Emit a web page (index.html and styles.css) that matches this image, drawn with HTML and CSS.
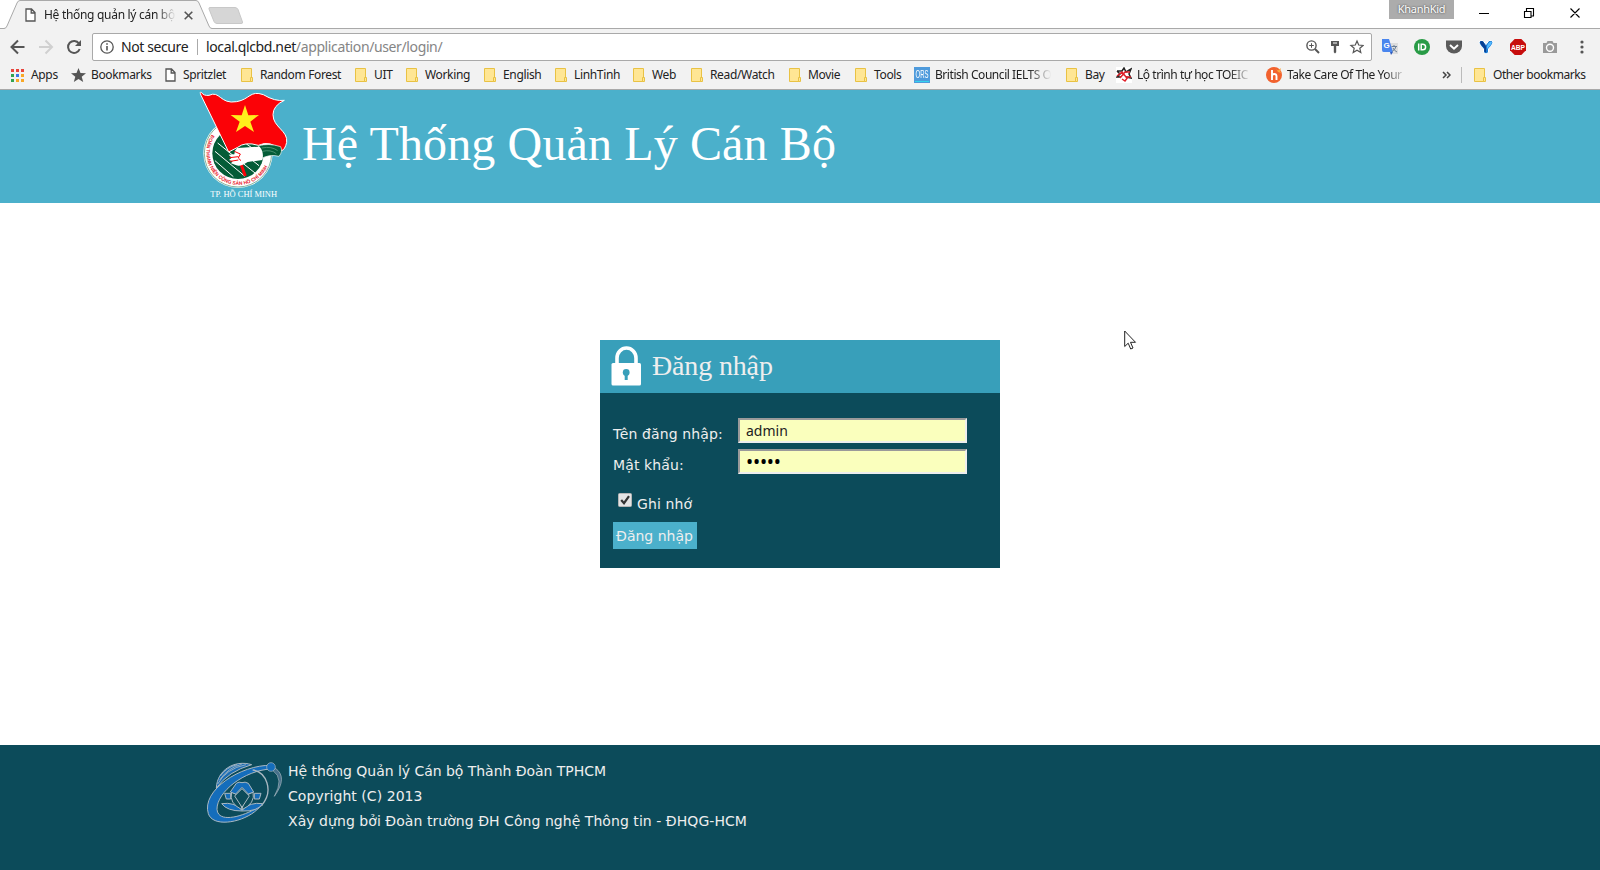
FILE: index.html
```html
<!DOCTYPE html>
<html lang="vi">
<head>
<meta charset="utf-8">
<title>Hệ thống quản lý cán bộ</title>
<link rel="stylesheet" href="styles.css">
</head>
<body>
<svg class="defs" width="0" height="0">
  <symbol id="folder" viewBox="0 0 12 14"><path d="M.5.5h10v13H.5z" fill="#ffe694" stroke="#e9c244"/><path d="M9.500 9.500h2v4h-2z" fill="#ffe694" stroke="#e9c244"/></symbol>
  <symbol id="page" viewBox="0 0 11 14"><path d="M1 1h5.500L10 4.500V13H1zM6.200 1v4H10" fill="#fff" stroke="#555" stroke-width="1.300"/></symbol>
</svg>
<div class="browser">
  <div class="tabstrip">
    <svg class="tab-shape" width="250" height="30" viewBox="0 0 250 30">
      <path d="M0 28.500H4Q6 28.500 7 26L17 3Q18 .5 20 .5H196Q198 .5 199 3L209 26Q210 28.500 212 28.500H250V30H0z" fill="#f2f2f2"/>
      <path d="M0 28.500H4Q6 28.500 7 26L17 3Q18 .5 20 .5H196Q198 .5 199 3L209 26Q210 28.500 212 28.500H250" fill="none" stroke="#a9a9a9"/>
      <path d="M210 7.500H235Q237 7.500 238 9.500L242.500 22Q243 23.500 241 23.500H217Q215 23.500 214 21.500L209 9Q208.500 7.500 210 7.500z" fill="#d6d6d6" stroke="#c8c8c8"/>
    </svg>
    <div class="tab">
      <svg width="11" height="14"><use href="#page"/></svg>
      <span class="tab-title">Hệ thống quản lý cán bộ</span>
      <svg width="9" height="9" viewBox="0 0 9 9"><path d="M.7.7l7.600 7.600M8.300.7L.7 8.300" stroke="#555" stroke-width="1.600"/></svg>
    </div>
    <div class="window-controls">
      <span class="profile">KhanhKid</span>
      <svg width="104" height="12" viewBox="0 0 104 12" fill="none" stroke="#000" stroke-width="1.100"><path d="M1 6.500h10M46.500 4.500h6.500v6h-6.500zM48.500 4.500v-3H55.500v7.500h-2.500M92.500 1.500l9 9M101.500 1.500l-9 9"/></svg>
    </div>
  </div>
  <div class="toolbar">
    <div class="nav">
      <svg width="72" height="16" viewBox="0 0 72 16" fill="none" stroke-width="2"><path d="M14.500 8H2M8 1.500L1.500 8 8 14.500" stroke="#555"/><path d="M29 8h12.500M35.500 1.500L42 8l-6.500 6.500" stroke="#d0d0d0"/><path d="M69 4.500A6 6 0 1 0 69.700 10" stroke="#555"/><path d="M71 1v6h-6z" fill="#555"/></svg>
    </div>
    <div class="omnibox">
      <svg width="14" height="14" viewBox="0 0 14 14"><circle cx="7" cy="7" r="6.200" fill="none" stroke="#555" stroke-width="1.300"/><path d="M7 6v4.500M7 3.200v1.600" stroke="#555" stroke-width="1.600"/></svg>
      <span class="secure">Not secure</span>
      <span class="url"><b>local.qlcbd.net</b>/application/user/login/</span>
      <svg class="omni-icons" width="59" height="16" viewBox="0 0 59 16" fill="none" stroke="#555" stroke-width="1.400"><circle cx="6.500" cy="6.500" r="4.600"/><path d="M10 10l4 4" stroke-width="2"/><path d="M4.200 6.500h4.600M6.500 4.200v4.600" stroke-width="1"/><path d="M26 2h8v5h-2.800v6.200L30 14.500l-1.200-1.300V7H26z" fill="#555" stroke="none"/><path d="M28 4h4" stroke="#fff" stroke-width="1"/><path d="M52 2l1.700 4 4.400.4-3.300 2.900 1 4.300-3.800-2.300-3.800 2.300 1-4.300-3.300-2.900 4.400-.4z" stroke-width="1.200"/></svg>
    </div>
    <div class="extensions">
      <svg width="16" height="16" viewBox="0 0 16 16"><path d="M6 4h10v11H9z" fill="#ddd"/><path d="M0 0h7l4 13H1.500Q0 13 0 11z" fill="#4a86ee"/><path d="M8 13h3l-2 3z" fill="#2c5bc0"/><text x="1.500" y="9" class="g-letter">G</text><path d="M9.500 7.500H15M12 6v1.500M14 7.500q-.5 3-4 5M11 9q1 2.500 4 4" stroke="#6b7f96" fill="none"/></svg>
      <svg width="16" height="16" viewBox="0 0 16 16"><circle cx="8" cy="8" r="8" fill="#289b46"/><path d="M4.700 4.500v7M7.200 5.200h1.600a2.800 2.800 0 0 1 0 5.600H7.200z" stroke="#fff" stroke-width="1.500" fill="none"/></svg>
      <svg width="16" height="16" viewBox="0 0 16 16"><path d="M0 1.500h16V7a8 7.500 0 0 1-16 0z" fill="#5b5b5b"/><path d="M4 6l4 3.700L12 6" stroke="#fff" stroke-width="2" fill="none"/></svg>
      <svg width="16" height="16" viewBox="0 0 16 16"><path d="M1 3q1-2 4-1.500l3 4 3-4Q14 1 15 3q0 2-4.500 7v3.500L8 15l-2.500-1.500V10Q1 5 1 3z" fill="#1a79d2" stroke="#fff"/><path d="M2 3q1-1.500 3-.5l3 5v6l-1.700-1V9.500Q2.500 5.500 2 3z" fill="#0a3f91"/><path d="M9 7q2-5 5-4-.5 3-5 7z" fill="#51b9ff"/></svg>
      <svg width="16" height="16" viewBox="0 0 16 16"><path d="M4.700 0h6.600L16 4.700v6.600L11.300 16H4.700L0 11.300V4.700z" fill="#c70d0d"/><text x="8" y="10.800" textLength="14" lengthAdjust="spacingAndGlyphs" class="abp">ABP</text></svg>
      <svg width="16" height="16" viewBox="0 0 16 16"><path d="M1 4h3.500L5.500 2h5l1 2H15v10H1z" fill="#9a9a9a"/><circle cx="8" cy="8.800" r="3.500" fill="none" stroke="#fff" stroke-width="1.400"/></svg>
      <svg class="kebab" width="4" height="16" viewBox="0 0 4 16" fill="#555"><circle cx="2" cy="3" r="1.600"/><circle cx="2" cy="8" r="1.600"/><circle cx="2" cy="13" r="1.600"/></svg>
    </div>
  </div>
  <div class="bookmarks">
    <span class="bm apps"><svg width="13" height="13" viewBox="0 0 13 13"><path d="M0 0h3v3H0zM5 0h3v3H5zM10 0h3v3h-3z" fill="#e8453c"/><path d="M0 5h3v3H0zM0 10h3v3H0z" fill="#32a350"/><path d="M5 5h3v3H5z" fill="#3b78e7"/><path d="M10 5h3v3h-3zM5 10h3v3H5zM10 10h3v3h-3z" fill="#f9a825"/></svg>Apps</span>
    <span class="bm wide"><svg width="15" height="14" viewBox="0 0 15 14"><path d="M7.500 0l2 5 5.500.3-4.300 3.500L12.200 14l-4.700-3-4.700 3 1.500-5.200L0 5.300 5.500 5z" fill="#555"/></svg>Bookmarks</span>
    <span class="bm page"><svg width="11" height="14"><use href="#page"/></svg>Spritzlet</span>
    <span class="bm"><svg width="12" height="14"><use href="#folder"/></svg>Random Forest</span>
    <span class="bm"><svg width="12" height="14"><use href="#folder"/></svg>UIT</span>
    <span class="bm"><svg width="12" height="14"><use href="#folder"/></svg>Working</span>
    <span class="bm"><svg width="12" height="14"><use href="#folder"/></svg>English</span>
    <span class="bm"><svg width="12" height="14"><use href="#folder"/></svg>LinhTinh</span>
    <span class="bm"><svg width="12" height="14"><use href="#folder"/></svg>Web</span>
    <span class="bm"><svg width="12" height="14"><use href="#folder"/></svg>Read/Watch</span>
    <span class="bm"><svg width="12" height="14"><use href="#folder"/></svg>Movie</span>
    <span class="bm"><svg width="12" height="14"><use href="#folder"/></svg>Tools</span>
    <span class="bm fade site"><svg width="16" height="16" viewBox="0 0 16 16"><path d="M0 0h16v16H0z" fill="#4f9bdc"/><path d="M1 14.500h14" stroke="#35d3ee"/><text x="1.500" y="11" textLength="13" lengthAdjust="spacingAndGlyphs" class="ors">ORS</text></svg>British Council IELTS O</span>
    <span class="bm"><svg width="12" height="14"><use href="#folder"/></svg>Bay</span>
    <span class="bm fade site"><svg width="16" height="16" viewBox="0 0 16 16"><path d="M0 0h16v16H0z" fill="#fff"/><path d="M1 4h5l2-3 2 4 5-3-2 5 2 4-5-1M5 10H1l3-3-3-3" fill="none" stroke="#222" stroke-width="1.500"/><path d="M1 9l5-4 4 5h5M14 5H9l-5 6M6 12l3 2 3-4" fill="none" stroke="#e0202a" stroke-width="1.500"/></svg>Lộ trình tự học TOEIC</span>
    <span class="bm fade site last"><svg width="16" height="16" viewBox="0 0 16 16"><circle cx="8" cy="8" r="8" fill="#f2622e"/><path d="M6 3v10M6 9q0-2 2.200-2T10.500 9v4" fill="none" stroke="#fff" stroke-width="1.900"/><path d="M10 2l2 1.500L15 1l-1 3 1 2-3-1z" fill="#f9a63b"/></svg>Take Care Of The Your</span>
    <svg class="more" width="9" height="8" viewBox="0 0 9 8"><path d="M1 1l3 3-3 3M5 1l3 3-3 3" fill="none" stroke="#444" stroke-width="1.500"/></svg>
    <span class="sep"></span>
    <span class="bm other"><svg width="12" height="14"><use href="#folder"/></svg>Other bookmarks</span>
  </div>
</div>

<header class="site-header">
  <svg class="emblem" width="100" height="113" viewBox="0 6 300 339">
    <circle cx="129" cy="196" r="104" fill="#fff"/>
    <circle cx="129" cy="196" r="101" fill="none" stroke="#0b6b3d" stroke-width="1.500"/>
    <circle cx="129" cy="196" r="77" fill="#045c37"/>
    <path d="M68 165l112 90M60 190l90 75M82 145l110 88M60 218l55 48M100 130l100 70" stroke="#fff" stroke-width="3"/>
    <path id="ring-text" d="M50 140A97 97 0 1 0 219 234" fill="none"/>
    <text class="ring-label" textLength="318" lengthAdjust="spacingAndGlyphs"><textPath href="#ring-text">ĐOÀN THANH NIÊN CỘNG SẢN HỒ CHÍ MINH</textPath></text>
    <path d="M18 22Q13 10 19 13Q26 24 42 22C75 6 75 50 125 41C165 34 165 6 205 20Q240 41 268 37Q234 53 234 80C234 118 280 128 275 163Q270 185 260 188Q225 155 190 172Q150 160 128 178L101 192z" fill="#fb0207" stroke="#fff" stroke-width="3"/>
    <path d="M150 51l10 31 32-1-26 20 11 31-27-18-27 18 11-31-27-20 33 1z" fill="#ffed1c"/>
    <path d="M190 174q30-10 67 2q7 15-5 29q-30-8-57 9z" fill="#045c37" stroke="#fff" stroke-width="2"/>
    <path d="M200 180q30-6 48 8M202 190q25-6 42 7" stroke="#69a789" stroke-width="2" fill="none"/>
    <path d="M137 226l14 38" stroke="#fb0207" stroke-width="9"/>
    <path d="M120 188q5-10 20-9l54-3q14 17 8 40l-44 6q-20 14-34 10l-16-6 5-6-11-4 8-7-9-9 17-1z" fill="#fff"/>
    <path d="M104 209l26-3M106 220l24-4M118 190l18 8-6 12 8 8" stroke="#fb0207" stroke-width="3" fill="none"/>
    <text x="146" y="326" textLength="200" lengthAdjust="spacingAndGlyphs" class="city">TP. HỒ CHÍ MINH</text>
  </svg>
  <h1>Hệ Thống Quản Lý Cán Bộ</h1>
</header>

<main>
  <form class="login">
    <div class="login-head">
      <svg width="31" height="40" viewBox="0 0 31 40"><path d="M6 20V12a9.500 10 0 0 1 19 0V20" fill="none" stroke="#fff" stroke-width="3.600"/><rect x=".5" y="17" width="29.500" height="22.500" rx="1.500" fill="#fff"/><circle cx="15.200" cy="26.500" r="3.400" fill="#389fba"/><path d="M13.700 27h3v7h-3z" fill="#389fba"/></svg>
      <h2>Đăng nhập</h2>
    </div>
    <div class="login-body">
      <div class="row"><label for="u">Tên đăng nhập:</label><input id="u" type="text" value="admin"></div>
      <div class="row"><label for="p">Mật khẩu:</label><input id="p" class="secret" type="password" value="admin"></div>
      <div class="remember">
        <svg width="14" height="14" viewBox="0 0 14 14"><rect x=".5" y=".5" width="13" height="13" rx="1" fill="#e4e4e4" stroke="#b5b5b5"/><path d="M3.200 7l2.800 3.200 5-7" fill="none" stroke="#333" stroke-width="2.200"/></svg>
        <span>Ghi nhớ</span>
      </div>
      <button type="button">Đăng nhập</button>
    </div>
  </form>
  <svg class="cursor" width="13" height="20" viewBox="0 0 13 20"><path d="M.7 1v15.500l3.500-3.300 2.500 5.800 2.300-1-2.500-5.700h5z" fill="#fff" stroke="#222"/></svg>
</main>

<footer>
  <svg class="uit" width="80" height="66" viewBox="45 74 240 198">
    <g stroke="#aab9c2" stroke-width="3" fill="none">
      <path d="M76 158C78 105 130 72 182 88Q112 108 76 158z" fill="#1a6cb4"/>
      <path d="M80 146Q105 100 165 88M86 134Q112 96 152 87M88 122Q106 96 138 88" stroke-width="2.500"/>
      <path d="M240 90C150 88 30 165 52 235C65 275 145 264 190 230L215 208C150 250 80 262 78 222C77 170 160 105 240 101z" fill="#146dbb"/>
      <path d="M185 104C225 110 250 165 212 210" stroke-width="4"/>
      <path d="M252 98Q292 125 250 183Q280 130 246 106z" fill="#47708b" stroke-width="2"/>
      <circle cx="240" cy="95" r="13" fill="#146dbb" stroke-width="2"/>
      <path d="M92 205q38-6 61 20q24-26 62-20q-15 24-62 22q-45 0-61-22z" fill="#146dbb"/>
      <path d="M122 170q24 6 31 53q8-47 33-53q8 34-33 53q-40-19-31-53z" fill="#0c4b5a"/>
      <path d="M153 160l22 22-22 34-22-34z" fill="#0c4b5a"/>
      <path d="M136 144q8-6 17-2 9-4 19 2l16 26-16 6-19-20-19 20-16-6z" fill="#146dbb"/>
      <path d="M101 174h18v17h-13zM190 174h20l-5 17h-15z" fill="#146dbb"/>
    </g>
  </svg>
  <div class="credits">
    <p>Hệ thống Quản lý Cán bộ Thành Đoàn TPHCM</p>
    <p class="spaced">Copyright (C) 2013</p>
    <p class="spaced">Xây dựng bởi Đoàn trường ĐH Công nghệ Thông tin - ĐHQG-HCM</p>
  </div>
</footer>
</body>
</html>
```
FILE: styles.css
```css
* { box-sizing: border-box; }
body { margin: 0; width: 1600px; height: 870px; overflow: hidden; display: flex; flex-direction: column; background: #fff; font-family: "DejaVu Sans", Verdana, sans-serif; font-size: 14px; }
svg { flex: none; display: block; }
.defs { position: absolute; }
h1, h2, p { margin: 0; font-weight: 400; }

.browser { height: 90px; background: #f2f2f2; border-bottom: 1px solid #a9a9a9; font-family: "Noto Sans", "Open Sans", sans-serif; font-size: 12px; color: #222; }
.tabstrip { position: relative; height: 29px; background: #fff; border-bottom: 1px solid #a9a9a9; display: flex; justify-content: space-between; }
.tab-shape { position: absolute; left: 0; top: 0; }
.tab { position: relative; display: flex; align-items: center; padding: 1px 0 0 25px; width: 200px; height: 29px; }
.tab-title { width: 132px; margin: 0 8px; padding-bottom: 1px; white-space: nowrap; overflow: hidden; letter-spacing: -.3px; -webkit-mask-image: linear-gradient(90deg, #000 85%, transparent); mask-image: linear-gradient(90deg, #000 85%, transparent); }
.window-controls { display: flex; gap: 24px; padding-right: 18px; }
.window-controls svg { margin-top: 7px; }
.profile { width: 65px; height: 19px; background: #acacac; color: #fff; font-size: 11px; line-height: 17px; text-align: center; letter-spacing: -.3px; text-shadow: 0 0 2px #333; }

.toolbar { height: 36px; display: flex; align-items: center; padding-left: 10px; }
.nav { width: 82px; }
.omnibox { width: 1280px; height: 28px; border: 1px solid #a9a9a9; border-radius: 2px; background: #fff; display: flex; align-items: center; padding: 0 7px; font-size: 14px; }
.secure { width: 77px; margin-left: 7px; height: 16px; line-height: 16px; border-right: 1px solid #aaa; letter-spacing: -.4px; white-space: nowrap; }
.url { margin-left: 8px; padding-bottom: 1px; color: #858585; letter-spacing: -.38px; }
.url b { font-weight: 400; color: #222; }
.omni-icons { margin-left: auto; }
.extensions { display: flex; gap: 16px; padding-left: 10px; }
.kebab { margin-left: 6px; }
.g-letter { font: bold 8px "Liberation Sans", sans-serif; fill: #fff; }
.abp { font: bold 7px "Liberation Sans", sans-serif; fill: #fff; text-anchor: middle; }
.ors { font: 10px "Liberation Sans", sans-serif; letter-spacing: 0; fill: #fff; }

.bookmarks { display: grid; align-items: center; height: 20px; padding-left: 11px; grid-template-columns: 60px 94px 76px 114px 51px 78px 71px 78px 58px 98px 66px 59px 152px 50px 150px 176px 19px 13px 1fr; line-height: 18px; }
.bm { display: flex; align-items: center; gap: 7px; height: 20px; white-space: nowrap; letter-spacing: -.35px; }
.wide { gap: 5px; }
.site { gap: 5px; margin-right: 12px; letter-spacing: -.45px; }
.other { letter-spacing: -.45px; }
.fade { -webkit-mask-image: linear-gradient(90deg, #000 82%, transparent 98%); mask-image: linear-gradient(90deg, #000 82%, transparent 98%); }
.last { margin-right: 32px; }
.sep { width: 1px; height: 16px; background: #bbb; }

.site-header { height: 113px; background: #4bb0cb; display: flex; padding-left: 195px; }
.site-header h1 { margin-left: 7px; padding-top: 26px; font: 48px/55px "Liberation Serif", "Times New Roman", serif; letter-spacing: .13px; color: #fff; white-space: nowrap; }
.ring-label { font: bold 15px "Liberation Sans", sans-serif; fill: #e8202a; }
.city { font: 22px "Liberation Serif", serif; fill: #fff; text-anchor: middle; }

main { position: relative; height: 542px; padding-top: 137px; }
.login { width: 400px; margin: 0 auto; color: #eee; }
.login-head { height: 53px; background: #389fba; display: flex; padding: 6px 0 0 11px; }
.login-head h2 { margin-left: 10px; font: 28px/40px "Liberation Serif", serif; letter-spacing: -.15px; }
.login-body { height: 175px; padding: 25px 13px 0; background: #0c4b5a; }
.row { display: flex; height: 25px; margin-bottom: 6px; }
.row label { width: 125px; padding-top: 6px; line-height: 20px; letter-spacing: .13px; white-space: nowrap; }
.row input { width: 229px; height: 25px; padding: 0 6px; border: 2px solid; border-color: #9a9a9a #eee #eee #9a9a9a; background: #faffbd; color: #222; font: 14px "Noto Sans", sans-serif; outline: 0; border-radius: 0; }
.row .secret { font: 19px "Noto Sans", sans-serif; letter-spacing: -.2px; color: #000; }
.remember { display: flex; gap: 5px; padding: 13px 0 0 5px; height: 42px; }
.remember span { line-height: 20px; padding-top: 1px; letter-spacing: .1px; }
.login button { display: block; width: 84px; height: 27px; padding: 0 1px 0 0; border: 0; background: #4bb0cb; color: #eee; font: 14px "DejaVu Sans", sans-serif; white-space: nowrap; }
.cursor { position: absolute; left: 1124px; top: 127px; }

footer { flex: 1; background: #0c4b5a; color: #eee; display: flex; padding: 15px 0 0 206px; }
.credits { margin: -1px 0 0 2px; line-height: 25px; white-space: nowrap; letter-spacing: -.04px; }
.credits .spaced { letter-spacing: .05px; }
```
